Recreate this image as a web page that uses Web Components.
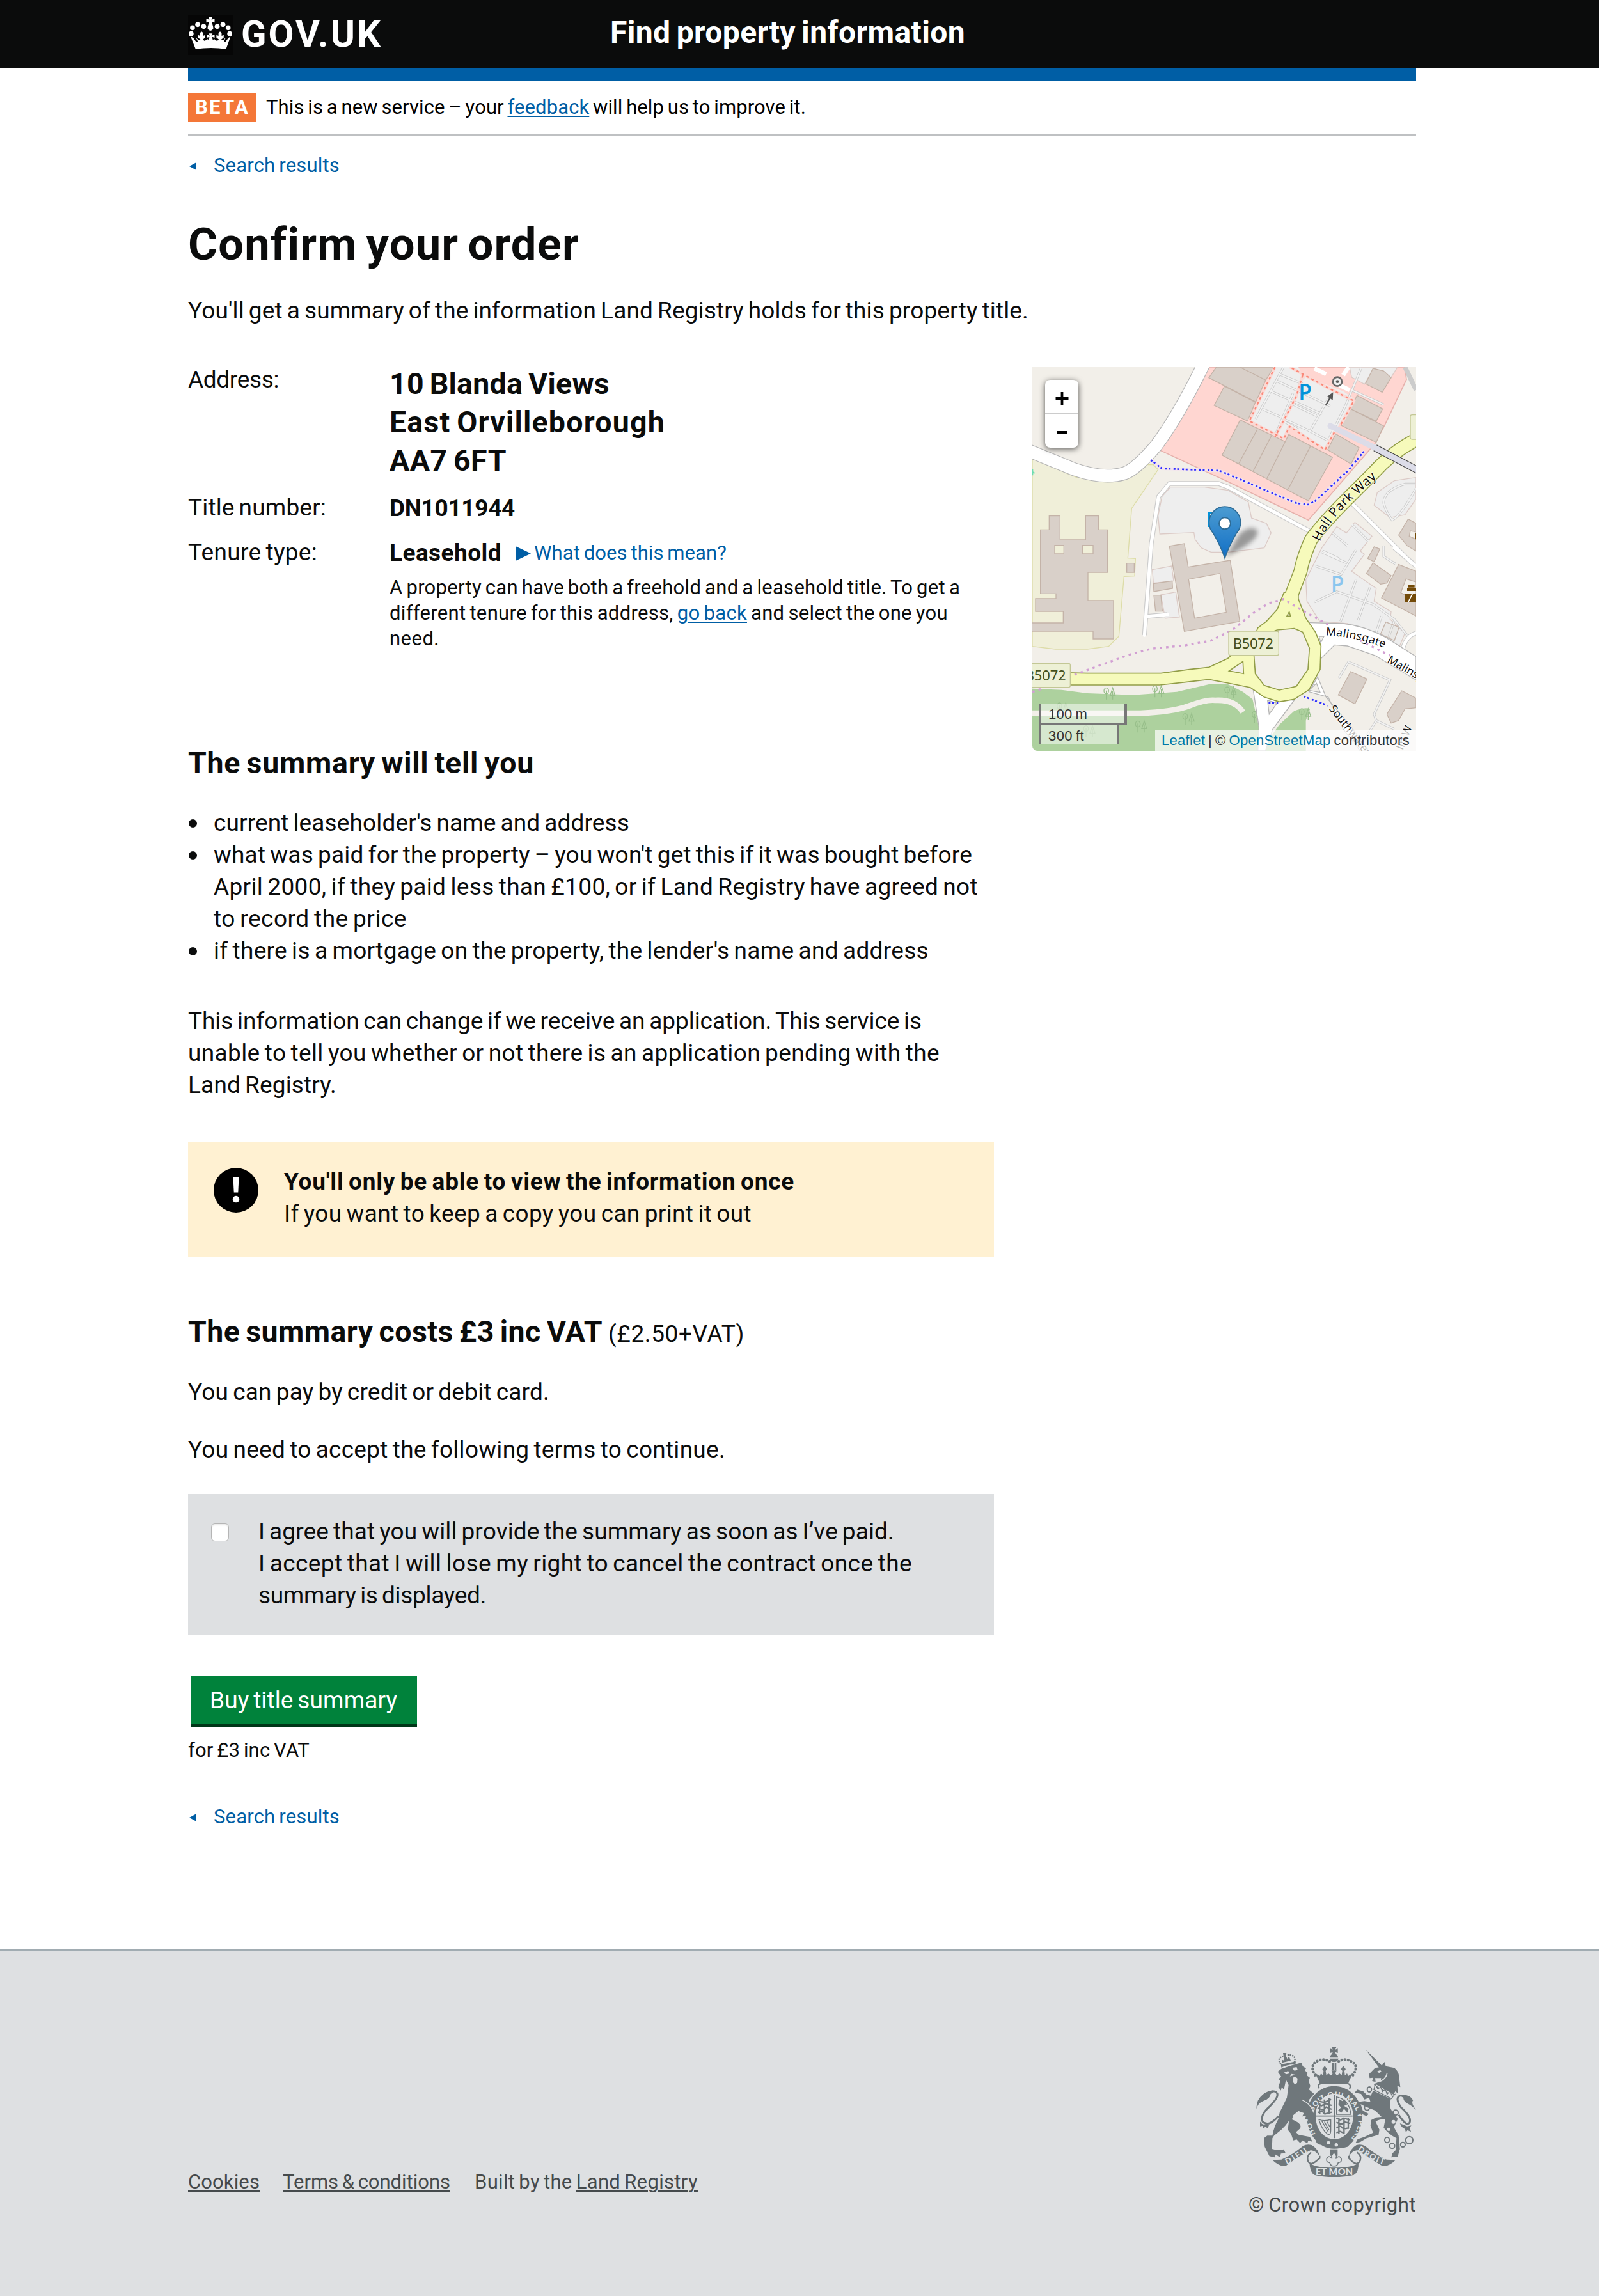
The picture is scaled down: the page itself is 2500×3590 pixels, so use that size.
<!DOCTYPE html>
<html lang="en">
<head>
<meta charset="utf-8">
<title>Confirm your order</title>
<style>
body{margin:0;background:#fff;color:#0b0c0c;font-family:Roboto,"Noto Sans",sans-serif;font-size:37px;line-height:50px}
</style>
</head>
<body>
<order-page></order-page>
<script>
function define(name, css, html, connected) {
  const tpl = document.createElement('template');
  tpl.innerHTML = '<style>' + css + '</style>' + html;
  customElements.define(name, class extends HTMLElement {
    constructor() {
      super();
      this.attachShadow({mode: 'open'}).append(tpl.content.cloneNode(true));
    }
    connectedCallback() { if (connected) connected.call(this); }
  });
}
const LINK = 'a{color:#005ea5;text-decoration:underline;text-decoration-thickness:2px;text-underline-offset:3px}';

/* One line of copy, tracked so that it runs to the given measure. */
define('fit-text', ':host{display:inline-block;width:max-content;white-space:nowrap;vertical-align:baseline;word-spacing:-.065em}', '<slot></slot>', function () {
  const w = parseFloat(this.getAttribute('w'));
  const n = this.textContent.length;
  const natural = this.getBoundingClientRect().width;
  if (w && n && natural) this.style.letterSpacing = ((w - natural) / n).toFixed(3) + 'px';
});

define('crown-icon', ':host{display:block;width:70px;height:62px}svg{display:block}', `
<svg width="70" height="62" viewBox="34 72 172 186" preserveAspectRatio="none" fill="#fff">
<rect x="34" y="72" width="172" height="186" fill="#060606"/>
<ellipse cx="46" cy="158" rx="9.500" ry="12"/><ellipse cx="51" cy="130" rx="9.500" ry="11.500"/><ellipse cx="71" cy="115" rx="9.500" ry="11.500"/><ellipse cx="94" cy="124" rx="9.500" ry="11.500"/>
<ellipse cx="146" cy="124" rx="9.500" ry="11.500"/><ellipse cx="168" cy="115" rx="9.500" ry="11.500"/><ellipse cx="188" cy="130" rx="9.500" ry="11.500"/><ellipse cx="194" cy="158" rx="9.500" ry="12"/>
<path d="M112 78h16l-4 14 12-4v18l-11-4 5 22a11 14 0 1 1-20 0l5-22-11 4V88l12 4z"/>
<path d="M44 172l10 6 12 20 6-2-8-20 10 12 8-2-10-10 0-12 8 4 0-14 6-6 6 6 0 14 8-4 0 12-10 10 8 6 10-8 6 3 2-14-10 4v-14l12 4-4-10h14l-4 10 12-4v14l-10-4 3 14 6-3 10 8 8-6-10-10 0-12 8 4 0-14 6-6 6 6 0 14 8-4 0 12-10 10 8 2 10-12-8 20 6 2 12-20 8-6-17 58q-57-10-117 0z"/>
</svg>`);

define('gov-header', `
:host{display:block;background:#0b0c0c;height:106px;color:#fff}
.wrap{padding-left:294px;display:flex}
crown-icon{margin-top:24px}
.logo{margin:18px 0 0 13px;width:219px;font:bold 58px/70px Roboto,sans-serif}
.svc{margin:17px 0 0 358px;font:bold 48px/68px Roboto,sans-serif}
`, `<div class="wrap"><crown-icon></crown-icon><div class="logo"><fit-text w="221">GOV.UK</fit-text></div><div class="svc"><fit-text w="555">Find property information</fit-text></div></div>`);

define('phase-banner', `
:host{display:flex;box-sizing:border-box;border-top:20px solid #005ea5;border-bottom:2px solid #bfc1c3;height:106px;padding-top:20px;font-size:31px;line-height:43px}
.tag{box-sizing:border-box;width:106px;height:44px;padding-left:11px;background:#f47738;color:#fff;font-weight:700;margin-right:16px}
.msg{color:#000}
${LINK}`, `<div class="tag"><fit-text w="85">BETA</fit-text></div><div class="msg"><fit-text w="844">This is a new service – your <a>feedback</a> will help us to improve it.</fit-text></div>`);

define('back-link', `
:host{display:flex;align-items:center;height:40px;font-size:31px;line-height:40px;color:#005ea5}
svg{display:block;width:11px;height:12px;margin:1px 27px 0 2px}`,
`<svg viewBox="0 0 11 12"><path d="M0 6L11 0v12z" fill="#005ea5"/></svg><fit-text w="197">Search results</fit-text>`);

define('detail-row', `
:host{display:flex}
.k{width:315px;flex:none;padding-top:1px;box-sizing:border-box;height:50px}
.v{padding-top:2px;flex:none;font-weight:700}
::slotted(*){display:block}`, `<div class="k"><slot name="label"></slot></div><div class="v"><slot></slot></div>`);

define('what-toggle', `
:host{display:inline-flex !important;align-items:center;color:#005ea5;font-size:31px;font-weight:400;line-height:50px;margin-left:22px}
svg{display:block;margin-right:5px}`, `<svg width="24" height="23" viewBox="0 0 24 23"><path d="M0 0l24 11.500L0 23z" fill="#005ea5"/></svg><fit-text w="301">What does this mean?</fit-text>`);

define('bullet-item', `
:host{display:flex}
i{flex:none;width:13px;height:13px;border-radius:50%;background:#0b0c0c;margin:19px 26px 0 1px}
`, `<i></i><div><slot></slot></div>`);

define('warning-notice', `
:host{display:flex;box-sizing:border-box;height:180px;background:#fff1d2;padding:37px 0 0 40px}
svg{display:block;margin:3px 40px 0 0;flex:none}
b,span{display:block}`, `<svg width="70" height="70"><circle cx="35" cy="35" r="35"/><path d="M30.500 14h9l-1.200 24.500h-6.600z" fill="#fff"/><circle cx="35" cy="49" r="5.300" fill="#fff"/></svg>
<div><b><fit-text w="798">You'll only be able to view the information once</fit-text></b><span><fit-text w="731">If you want to keep a copy you can print it out</fit-text></span></div>`);

define('terms-box', `
:host{display:flex;box-sizing:border-box;height:220px;background:#dee0e2;padding:34px 0 0 36px}
i{flex:none;box-sizing:border-box;width:28px;height:28px;background:#fff;border:1px solid #b5b5b5;border-radius:6px;margin:12px 46px 0 0;box-shadow:inset 0 2px 2px rgba(0,0,0,.08)}
`, `<i role="checkbox"></i><div><div><fit-text w="994">I agree that you will provide the summary as soon as I’ve paid.</fit-text></div><div><fit-text w="1022">I accept that I will lose my right to cancel the contract once the</fit-text></div><div><fit-text w="356">summary is displayed.</fit-text></div></div>`);

define('buy-button', `
:host{display:block;box-sizing:border-box;width:354px;height:76px;background:#00823b;box-shadow:0 4px 0 #003618;color:#fff;padding:1px 0 0 30px;line-height:76px}
`, `<fit-text w="293">Buy title summary</fit-text>`);

define('map-zoom', `
:host{display:block;width:52px;height:106px;background:#fff;border-radius:8px;box-shadow:0 2px 10px rgba(0,0,0,.65)}
svg{display:block}`, `<svg width="52" height="106"><path d="M0 53h52" stroke="#ccc" stroke-width="2"/><path d="M16.500 29h20M26.500 19v20M19 82h16" stroke="#000" stroke-width="3.800"/></svg>`);

define('map-scale', `
:host{display:block;font:22px/26px "Liberation Sans",Arial,sans-serif;color:#333}
div{box-sizing:border-box;background:rgba(255,255,255,.5);border:4px solid #777;border-top:0;padding-left:11px}
.m{width:138px;height:34px;padding-top:4px}
.f{width:126px;height:30px;border-bottom:0;padding-top:4px}`, `<div class="m"><fit-text w="61">100 m</fit-text></div><div class="f"><fit-text w="56">300 ft</fit-text></div>`);

define('map-credit', `
:host{display:block;box-sizing:border-box;width:408px;height:32px;padding-left:10px;background:rgba(255,255,255,.7);font:22px/32px "Liberation Sans",Arial,sans-serif;color:#333;white-space:nowrap}
a{color:#0078a8}`, `<fit-text w="388"><a>Leaflet</a> | © <a>OpenStreetMap</a> contributors</fit-text>`);

define('property-map', `
:host{display:block;position:relative;width:600px;height:600px;overflow:hidden;border-radius:0 0 0 8px}
.tiles{display:block}
map-zoom{position:absolute;left:20px;top:20px}
map-scale{position:absolute;left:10px;top:526px}
map-credit{position:absolute;right:0;bottom:0}
.bl{fill:#d9d0c9;stroke:#c4b3a8;stroke-width:4}
.pk{fill:#eee;stroke:#dccbc7;stroke-width:4}
.cs{fill:none;stroke:#b5b5b5}
.wh{fill:none;stroke:#fff}
.lot{fill:none;stroke:#c9c9c9;stroke-width:11}
.lot2{fill:none;stroke:#f2f2f2;stroke-width:6}
.lbl{font-family:"Noto Sans",sans-serif;fill:#111;stroke:#fff;stroke-width:7;paint-order:stroke;stroke-opacity:.6}
`, `
<svg class="tiles" width="600" height="600" viewBox="42 42 1800 1800">
<defs>
<linearGradient id="pin" x1="0" y1="0" x2="0" y2="1"><stop offset="0" stop-color="#4c9cd1"/><stop offset="1" stop-color="#126fc6"/></linearGradient>
<filter id="soft" x="-50%" y="-50%" width="200%" height="200%"><feGaussianBlur stdDeviation="11"/></filter>
<path id="hall" d="M1392 862Q1430 775 1500 705T1665 555"/>
<path id="mal" d="M1418 1300Q1560 1307 1700 1362"/>
<g id="tree" fill="none" stroke="#98bf8b" stroke-width="4"><ellipse cx="14" cy="16" rx="11" ry="14"/><path d="M14 14v42M44 2L32 38h24zM44 18v38"/></g>
<path id="lots" d="M1220 42L1090 285M1200 75L1310 120M1185 105L1440 225M1160 155L1400 262M1125 240L1205 275M1210 290L1290 335M1240 335L1225 375M1265 165L1180 365M1250 210L1375 270M1230 290L1330 335L1425 385M1345 342L1430 190M1585 45L1510 225L1430 385M1540 150L1690 218
M1400 910L1515 960M1370 975L1490 1015L1560 900M1365 1145L1470 1095L1640 1155L1740 1225L1800 1300M1560 1040L1488 1235M1625 1075L1570 1230M1680 1210L1650 1300M1740 1230L1710 1320M1450 820L1520 880M1540 780L1620 860M1405 905L1480 940
M1690 880V930L1745 965M1480 1500L1525 1425L1720 1510L1645 1670L1655 1700L1740 1740M1655 1700L1600 1790M1840 590H1790Q1690 620 1690 680Q1700 720 1730 760Q1770 740 1842 610"/>
</defs>
<rect x="42" y="42" width="1800" height="1800" fill="#f2efe9"/>
<path d="M42 470L250 560 480 560 575 500H610L632 522 508 705 490 938 526 940 522 1022 472 1024 448 1305 400 1352 300 1365H150L42 1352z" fill="#f0efd9" stroke="#dddca8" stroke-width="4"/>
<path d="M30 530q20 8 22 8M42 520v30" stroke="#6edcb0" stroke-width="8"/>
<path d="M872 42L640 432 960 580 1337 760 1650 400 1697 310 1797 100 1788 42z" fill="#ffd6d1" stroke="#e6b1ac" stroke-width="5"/>
<path class="bl" d="M905 42L870 92 1090 205 1137 103 1175 42zM943 132L895 222 1052 295 1088 207zM1015 42L1137 103M1017 290L932 455 1337 670 1450 465 1245 358 1228 392zM1097 335L1010 495M1163 365L1078 530M1230 388L1143 563M1347 412L1243 613M1427 430L1465 355 1575 420 1537 497zM1490 315L1535 238 1690 318 1655 395zM1535 238L1565 175 1685 238 1655 295z"/>
<path class="pk" d="M1530 42L1540 90 1600 122 1645 48 1725 90 1755 42z"/>
<path class="bl" d="M1605 120L1640 48 1690 60 1725 92 1683 160z"/>
<path d="M1180 42L1060 290 1225 378 1250 325 1415 428 1550 190 1500 155 1310 80 1290 42z" fill="#eee"/>
<path class="pk" d="M1400 890L1470 790 1515 820 1555 770 1635 835 1580 905 1600 920 1540 1000 1655 1080 1645 1140 1725 1190 1720 1225 1790 1290 1765 1350 1520 1245 1390 1235 1330 1140 1325 1040z"/>
<path class="pk" d="M1842 560L1740 575 1660 630 1645 690 1720 748 1790 735 1842 660z"/>
<path class="pk" d="M690 605H850L960 620 1055 675 1070 750 1140 775 1162 820 1130 890 960 910H880L835 890 805 850 800 818 640 825 632 740 650 650zM605 992L695 975 705 1045 610 1055zM645 1110L715 1097 732 1215 665 1220z"/>
<use href="#lots" class="lot"/><use href="#lots" class="lot2"/>
<path d="M1180 42L1060 295 1222 378 1248 320 1415 430 1460 345M1490 310L1550 200 1430 140 1320 80 1250 42M1310 80L1280 180 1180 370M1325 50L1310 100" fill="none" stroke="#fbd9d4" stroke-width="14"/>
<path d="M1180 42L1060 295 1222 378 1248 320 1415 430 1460 345M1490 310L1550 200 1430 140 1320 80 1250 42M1310 80L1280 180 1180 370" fill="none" stroke="#fa8878" stroke-width="7" stroke-dasharray="12 14"/>
<path class="wh" stroke-width="20" d="M1365 48L1420 75M1480 125L1530 150M1500 80L1525 42"/>
<circle cx="1473" cy="110" r="21" fill="#eee" stroke="#666" stroke-width="8"/><circle cx="1473" cy="110" r="7" fill="#555"/>
<path d="M1418 222L1442 180" stroke="#555" stroke-width="7"/><path d="M1425 180L1453 160 1451 197z" fill="#555"/>
<path class="bl" fill-rule="evenodd" d="M121 740H172V852H292V740H352V805H395V1005H303V1137H423V1317H327V1281H30V1242H187V1188H57V1128H153V1105H80V805H121zM147 878V918H190V878zM277 878V918H327V878z"/>
<path class="bl" fill-rule="evenodd" d="M685 882L755 870 773 980 970 948 1015 1235 755 1282zM775 1037L922 1010 952 1192 803 1220z"/>
<path class="bl" d="M485 962H520V1005H485zM610 1058L698 1045 700 1080 612 1095zM612 1112H645L652 1187H620zM1610 1010L1640 960 1725 1020 1705 1055 1675 1060zM1535 1470L1612 1505 1555 1622 1477 1580zM1775 1560L1842 1595V1640L1790 1645 1760 1700 1725 1712 1705 1670zM1645 885L1672 895 1645 955 1615 940z"/>
<path class="bl" fill-rule="evenodd" d="M1760 968L1842 1000V1210L1680 1125zM1795 1035L1770 1100 1842 1140V1050zM1760 830L1805 755 1842 775V905L1800 880zM1815 810L1810 835 1842 850V815z"/>
<path class="bl" fill-opacity=".2" d="M1675 1295L1700 1238 1762 1262 1740 1325z"/>
<path d="M1805 1064h30v12h-30zM1800 1080h42v12h-42zM1788 1105h54v40h-54zM1838 820h10v30h-10z" fill="#734a08"/><path d="M1805 1145l20-40" stroke="#fff" stroke-width="5"/>
<path d="M42 1550L180 1556 300 1572 520 1580 720 1565 870 1530H960L1030 1565 1075 1600 1105 1730 1100 1842H42zM1115 1842L1200 1720 1270 1655Q1320 1635 1345 1645L1325 1700V1842z" fill="#add19e"/>
<path d="M42 1665H550Q700 1660 780 1630T900 1605Q990 1600 1030 1660" fill="none" stroke="#f2efe9" stroke-width="26"/>
<use href="#tree" x="375" y="1545"/><use href="#tree" x="603" y="1535"/><use href="#tree" x="155" y="1615"/><use href="#tree" x="280" y="1722"/><use href="#tree" x="523" y="1700"/><use href="#tree" x="745" y="1665"/><use href="#tree" x="942" y="1540"/><use href="#tree" x="1070" y="1655"/><use href="#tree" x="1292" y="1642"/><use href="#tree" x="800" y="1760"/>
<path d="M42 1556L180 1566 300 1576 520 1582 720 1565 870 1530" fill="none"/>
<path class="cs" stroke-width="64" d="M30 436L240 522Q380 570 475 540Q530 520 625 408Q730 265 845 30"/>
<path class="wh" stroke-width="57" d="M30 436L240 522Q380 570 475 540Q530 520 625 408Q730 265 845 30"/>
<path class="cs" stroke-width="22" stroke-linejoin="round" style="stroke:#ccc" d="M568 1300L600 870 634 650 685 588H915L960 605 1350 815M575 1212L675 1203M1530 670L1820 960M1740 890L1842 975M1780 1360Q1800 1300 1842 1290M1790 42L1842 150"/>
<path class="wh" stroke-width="15" stroke-linejoin="round" stroke-linecap="round" d="M568 1300L600 870 634 650 685 588H915L960 605 1350 815M575 1212L675 1203M1530 670L1820 960M1740 890L1842 975M1780 1360Q1800 1300 1842 1290"/>
<path d="M1320 1240L1500 1245Q1600 1255 1700 1310L1842 1400V1510L1650 1395 1520 1350 1460 1345 1390 1415zM1078 1555L1105 1730 1100 1842H1135L1170 1740 1270 1605 1150 1590zM1380 1495L1420 1590 1530 1720 1620 1842H1580L1500 1740 1430 1590 1340 1565z" fill="#fff" stroke="#b5b5b5" stroke-width="4"/>
<path d="M1145 1605L1190 1618 1153 1670zM1375 1525L1392 1568 1340 1558zM1387 1305L1410 1305 1395 1335z" fill="#f2efe9" stroke="#b5b5b5" stroke-width="4"/>
<path d="M1860 374Q1740 430 1640 540L1520 660Q1410 770 1350 850Q1310 940 1300 1000L1258 1110" fill="none" stroke="#929d48" stroke-width="66"/>
<path d="M42 1472L300 1478H645L780 1460 870 1450 960 1408 1090 1290 1100 1265 1140 1235 1190 1180 1222 1100 1288 1080 1290 1130 1325 1220 1370 1285 1396 1350 1392 1460 1340 1555 1270 1600 1200 1612 1130 1590 1065 1545 960 1524 870 1507 760 1520 640 1533H230L42 1530z" fill="#f6fabb" stroke="#929d48" stroke-width="5"/>
<path d="M1860 374Q1740 430 1640 540L1520 660Q1410 770 1350 850Q1310 940 1300 1000L1258 1110" fill="none" stroke="#f6fabb" stroke-width="57"/>
<path d="M1190 1275L1270 1268 1310 1285 1342 1360 1335 1460 1280 1540 1200 1557 1130 1535 1088 1480 1082 1400 1100 1310zM965 1467L1030 1423 1033 1480zM1236 1210L1247 1190 1253 1210z" fill="#f2efe9" stroke="#929d48" stroke-width="5"/>
<path d="M1650 421L1850 526" stroke="#444" stroke-width="34"/><path d="M1440 318L1650 421 1850 526" fill="none" stroke="#dcdce8" stroke-width="27" stroke-linecap="round"/>
<rect x="1815" y="266" width="60" height="115" rx="8" fill="#edf0d5" stroke="#c3c795" stroke-width="4"/>
<path d="M42 1565L90 1550M240 1485L500 1390 600 1363 760 1347 880 1325 980 1275 1080 1195 1150 1150 1220 1130 1310 1185 1440 1255M1580 1325L1720 1395" fill="none" stroke="#d29fd3" stroke-width="10" stroke-dasharray="11 19"/>
<path d="M598 478L650 518 850 525 920 528 1280 680 1335 687 1370 670 1520 530 1600 435" fill="none" stroke="#f3e4ee" stroke-width="14"/>
<path d="M598 478L650 518 850 525 920 528 1280 680 1335 687 1370 670 1520 530 1600 435M1150 1617H1195M1315 1587L1430 1630" fill="none" stroke="#2d2dff" stroke-width="8" stroke-dasharray="9 8 9 14"/>
<g font-family="Noto Sans" font-size="98"><text fill="#0092da" stroke="#0092da" stroke-width="3" x="1292" y="196">P</text>
<text fill="#8bc6ee" stroke="#8bc6ee" stroke-width="3" x="1444" y="1094">P</text></g>
<path d="M864 720h50v72h-50z" fill="#0092da"/><path d="M876 732h12v20h-12z" fill="#fff"/>
<g class="lbl">
<text font-size="60"><textPath href="#hall" textLength="405">Hall Park Way</textPath></text>
<text font-size="52"><textPath href="#mal" textLength="282">Malinsgate</textPath></text>
<text font-size="52" transform="translate(1704 1424) rotate(30)">Malinsgate</text>
<text font-size="52" transform="translate(1432 1645) rotate(52)">Southwater</text>
<text font-size="50" transform="translate(1780 1840) rotate(-68)">lin W</text>
</g>
<g fill="#edf0d5" stroke="#c3c795" stroke-width="4"><rect x="-20" y="1432" width="240" height="112" rx="8"/><rect x="963" y="1281" width="235" height="113" rx="8"/></g>
<g font-family="Noto Sans" font-size="66" fill="#45501b"><text x="8" y="1511" textLength="192">B5072</text><text x="983" y="1361" textLength="190">B5072</text></g>
<path d="M950 932L1010 830Q1060 780 1095 805Q1120 850 950 932z" fill="#000" opacity=".36" filter="url(#soft)"/>
<path d="M945 938Q925 880 890 820A74 74 0 1 1 1000 820Q965 880 945 938z" fill="url(#pin)" stroke="#2e6c97" stroke-width="5"/>
<circle cx="945" cy="775" r="27" fill="#fff" stroke="#2e6c97" stroke-width="6"/>
</svg>
<map-zoom></map-zoom><map-scale></map-scale><map-credit></map-credit>`);

define('royal-arms', ':host{display:block;width:250px;height:204px}svg{display:block}text{font-family:Lato,"Liberation Sans",sans-serif;font-weight:900}', `
<svg width="250" height="204" viewBox="132 60 750 612" fill="#6f777b">
<defs>
<path id="arc" d="M411 470A109 112 0 1 1 580 486"/>
<path id="dieu" d="M276 614Q330 590 384 546"/><path id="droit" d="M606 546Q660 592 740 616"/>
</defs>
<path d="M485 60h24l-6 14 12-4v20l-12-4 4 12h-20l4-12-12 4V70l12 4zM478 112a19 19 0 0 1 38 0zM476 116h42q-2 16-21 16t-21-16zM487 136h8v32h-8zM500 136h8v32h-8z"/>
<g fill="none" stroke="#6f777b" stroke-width="13" stroke-linecap="round" stroke-dasharray=".1 15.200"><path d="M408 194Q382 150 415 130Q450 110 482 134M586 194Q616 150 579 130Q544 110 512 134"/></g>
<path d="M408 184l22 14 6-12 10 10 2-22-6-8 12-16 10 16-6 8 3 20 10-8 12 10 8-10-6-14h24l-6 14 8 10 12-10 10 8 3-20-6-8 10-16 12 16-6 8 2 22 10-10 6 12 22-14-18 38q-2 8-6 14h-130q-4-6-6-14z"/>
<path d="M428 256q-12-24 20-24h100q34 0 22 26" fill="none" stroke="#6f777b" stroke-width="7"/>
<path fill-rule="evenodd" d="M497 245c72 0 131 60 131 142 0 88-60 152-131 152s-127-68-127-152 58-142 127-142zm2 36c-50 0-88 44-88 105s38 108 88 108 88-48 88-108-38-105-88-105z"/>
<text font-size="34" fill="#dee0e2"><textPath href="#arc" textLength="525">HONI SOIT QUI MAL Y PENSE</textPath></text>
<path d="M499 288v202M414 386h170" stroke="#6f777b" stroke-width="5"/>
<g fill="none" stroke="#6f777b" stroke-width="7"><path d="M424 316l28 6 32-14M424 328l14 10 20-10 28 8M420 348l26 8 14-12 26 10M420 370l20-8 14 14 32-8M430 326v50M452 308v70M474 300v76M508 396l20 8 14-8 28 8M508 416l26 8 12-10 28 6M508 440l20-6 14 12 22-4M508 464l18-6 18 8M520 396v74M544 396v74M564 396v50"/></g>
<g fill="none" stroke="#6f777b" stroke-width="4"><path d="M509 296Q570 310 576 378H509zM426 402Q452 412 482 402V450Q482 480 466 470Q440 450 426 402zM440 410l30 50M452 412l22 40M464 412l14 26"/></g>
<path d="M520 306l16 10 10-10 12 26-14 6 22 14-6 18-16-18-12 18-16-10 14-14-12-14z"/>
<path d="M432 484Q480 520 530 500Q560 480 590 500L560 530Q500 550 440 518z"/><circle cx="435" cy="497" r="20" fill="none" stroke="#6f777b" stroke-width="7"/><circle cx="471" cy="511" r="8" fill="#dee0e2"/><circle cx="508" cy="521" r="8" fill="#dee0e2"/>
<path d="M480 542h34v30h-34z"/><path d="M497 556q18 16 8 30q18-20 26 0q4 18-14 18-4 18-20 16-16 2-20-16-18 0-14-18 8-20 26 0-10-14 8-30z" fill="#dee0e2" stroke="#6f777b" stroke-width="5"/>
<!-- lion -->
<path d="M233 178L250 164 300 148 345 135 350 152 366 162 360 172 374 184 368 194 384 206 378 222 386 244 380 262 404 282 378 312 390 340 404 372 408 408 390 416 372 412 378 396 360 402 366 384 348 388 356 372 330 362 306 382 300 402Q350 420 338 444L318 462 332 474 384 484 396 506 376 502 372 514 350 500 338 512 322 496 306 500 296 470 280 450 286 408Q272 430 250 450L216 478 208 490 206 540 230 546 262 542 270 560 248 562 244 580 224 566 218 580 194 574 172 530 168 490 184 478 208 478Q214 440 236 400L242 370 276 300 284 240 272 216 262 262 252 250 248 266 236 250 246 220 236 212 250 202z"/>
<path d="M262 182l20-8 6 12-16 4zM300 160l22-4 4 12-14 6zM304 208q10-14 22 2l-2 20q-10 12-20-4zM290 200l8-12 18 4" fill="#dee0e2"/>
<path d="M347 310Q390 330 402 370" fill="none" stroke="#dee0e2" stroke-width="4"/>
<path d="M250 158q30-16 66-14l2-14-70 14z"/><g fill="none" stroke="#6f777b" stroke-width="8" stroke-linecap="round" stroke-dasharray=".1 11"><path d="M246 140q-20-28 18-36M312 132q10-38-40-32"/></g><path d="M258 90l16 0-4 10 8 18 8-12 8 20-40 10 0-14 10 4z"/>
<path d="M236 386Q190 440 162 412Q150 380 196 340Q246 290 226 274Q206 262 190 280" fill="none" stroke="#6f777b" stroke-width="9"/>
<path d="M224 268Q190 262 164 284 130 312 134 352 140 324 168 314 198 304 200 282zM150 412q10 18 30 14l14-2-8 20-10-8-10 8-4-12-12 2z"/>
<!-- unicorn -->
<path d="M646 74L726 154 712 164zM662 188L690 160 716 156 734 132 740 152 780 160Q800 176 802 200L808 250 794 244 796 278 784 270 770 300 740 290 690 252 684 236 716 222 718 208 690 208 692 226 676 222 680 206 664 208z"/>
<path d="M700 176l14-6 6 8-12 6z" fill="#dee0e2"/><path d="M712 224Q742 210 746 186M690 238L784 292" stroke="#dee0e2" stroke-width="5" fill="none"/>
<path d="M690 236l-6 26 82 42 16-20-14 4-8-20-14 16-8-24-14 12-8-22-14 8z" fill="#dee0e2" stroke="#6f777b" stroke-width="4"/>
<path d="M680 266L764 306Q750 350 778 370L796 400 778 438 800 478 806 540 796 576 766 580 770 562 786 546 790 490Q752 470 730 440L738 400Q710 400 692 412L710 450 706 474 650 490 620 508 598 512 608 494 640 484 680 464 668 430 672 404 696 392 720 390 690 360 640 340 622 330 632 360 660 376 650 386 618 372 606 320 640 316 668 320 662 300 640 308 624 282 594 276 606 262 634 270 650 286 670 290z"/>
<g fill="#dee0e2" stroke="none"><circle cx="776" cy="413" r="9"/><circle cx="754" cy="448" r="8"/></g>
<g fill="none" stroke="#6f777b" stroke-width="6"><ellipse cx="663" cy="261" rx="10" ry="12"/><ellipse cx="652" cy="345" rx="12" ry="14"/><circle cx="786" cy="370" r="12"/><ellipse cx="746" cy="498" rx="11" ry="13"/><circle cx="770" cy="526" r="12"/><circle cx="820" cy="520" r="11"/><circle cx="850" cy="499" r="17"/></g>
<path d="M800 380Q840 440 852 416Q862 390 812 346Q780 300 808 290Q830 288 840 306" fill="none" stroke="#6f777b" stroke-width="9"/>
<path d="M806 290Q850 280 868 312 856 324 882 358 862 336 840 326 824 318 822 300zM806 420q10 24 24 26l4 16 8-10 16 8-6-20 8-10-20 4z"/>
<!-- ribbons -->
<path d="M208 592L250 590Q300 570 352 526Q370 516 392 522Q426 540 430 580Q420 550 388 546Q350 562 270 620Q240 624 208 592zM786 592L744 590Q694 570 642 526Q624 516 602 522Q570 540 566 580Q576 550 606 546Q650 575 724 620Q756 624 786 592z"/>
<path d="M382 604Q400 628 497 628T612 604Q614 650 590 662Q550 672 497 672T404 662Q384 650 382 604z"/>
<path d="M390 556Q368 572 374 594Q384 620 410 600L430 584V572M604 556Q628 572 620 594Q608 620 584 600L567 584V572" fill="none" stroke="#6f777b" stroke-width="7"/>
<g fill="#dee0e2" font-size="38"><text><textPath href="#dieu" textLength="116">DIEU</textPath></text><text><textPath href="#droit" textLength="142">DROIT</textPath></text><text x="411" y="664" font-size="44" textLength="174">ET MON</text></g>
</svg>`);

define('gov-footer', `
:host{display:flex;box-sizing:border-box;height:542px;background:#dee0e2;border-top:2px solid #a1acb2;padding:150px 286px 0 294px;color:#454a4c;font-size:31px;line-height:40px;justify-content:space-between}
.links{display:flex;margin-top:192px;height:40px}
.a{width:148px}.b{width:300px}
u,.a fit-text,.b fit-text{text-decoration:underline;text-decoration-thickness:2px;text-underline-offset:3px}
.right{display:flex;flex-direction:column;align-items:flex-end}
.c{margin-top:24px;width:262px}
`, `<div class="links"><div class="a"><fit-text w="112">Cookies</fit-text></div><div class="b"><fit-text w="262">Terms &amp; conditions</fit-text></div><div><fit-text w="349">Built by the <u>Land Registry</u></fit-text></div></div>
<div class="right"><royal-arms></royal-arms><div class="c"><fit-text w="262">© Crown copyright</fit-text></div></div>`);

define('order-page', `
:host{display:block}
main{box-sizing:border-box;width:1920px;margin-left:294px;height:2942px}
back-link{margin-top:27px}
h1{margin:63px 0 0;font-size:70.500px;line-height:80px}
.lede{margin:39px 0 0;height:50px}
.cols{display:flex;gap:60px;margin-top:57px}
.left{width:1260px}
property-map{margin-top:6px;flex:none}
.addr{font-size:46.500px;line-height:60px}
.addr fit-text,.note fit-text,.p fit-text{display:block}
.r2{margin-top:18px}.r3{margin-top:18px}
.note{font-weight:400;font-size:31px;line-height:40px;padding-top:9px}
.ten{display:flex;height:50px}
h2{margin:0;font-size:46.500px;line-height:60px;height:60px;display:flex;align-items:baseline}
h2 .sm{font-size:37px;font-weight:400;margin-left:9px}
.p{margin:0}
${LINK}`, `
<gov-header></gov-header>
<main>
<phase-banner></phase-banner>
<back-link></back-link>
<h1><fit-text w="611">Confirm your order</fit-text></h1>
<p class="lede"><fit-text w="1314">You'll get a summary of the information Land Registry holds for this property title.</fit-text></p>
<div class="cols"><div class="left">
<detail-row><span slot="label"><fit-text w="142">Address:</fit-text></span><div class="addr"><fit-text w="344">10 Blanda Views</fit-text><fit-text w="431">East Orvilleborough</fit-text><fit-text w="183">AA7 6FT</fit-text></div></detail-row>
<detail-row class="r2"><span slot="label"><fit-text w="216">Title number:</fit-text></span><div><fit-text w="196">DN1011944</fit-text></div></detail-row>
<detail-row class="r3"><span slot="label"><fit-text w="202">Tenure type:</fit-text></span><div><div class="ten"><fit-text w="175">Leasehold</fit-text><what-toggle></what-toggle></div>
<div class="note"><fit-text w="892">A property can have both a freehold and a leasehold title. To get a</fit-text><fit-text w="873">different tenure for this address, <a>go back</a> and select the one you</fit-text><fit-text w="78">need.</fit-text></div></div></detail-row>
<h2 style="margin-top:144px"><fit-text w="541">The summary will tell you</fit-text></h2>
<div class="p" style="margin-top:39px">
<bullet-item><fit-text w="650">current leaseholder's name and address</fit-text></bullet-item>
<bullet-item><fit-text w="1186">what was paid for the property – you won't get this if it was bought before</fit-text><fit-text w="1195">April 2000, if they paid less than £100, or if Land Registry have agreed not</fit-text><fit-text w="302">to record the price</fit-text></bullet-item>
<bullet-item><fit-text w="1118">if there is a mortgage on the property, the lender's name and address</fit-text></bullet-item></div>
<div class="p" style="margin-top:60px"><fit-text w="1147">This information can change if we receive an application. This service is</fit-text><fit-text w="1175">unable to tell you whether or not there is an application pending with the</fit-text><fit-text w="232">Land Registry.</fit-text></div>
<warning-notice style="margin-top:64px"></warning-notice>
<h2 style="margin-top:86px"><fit-text w="648">The summary costs £3 inc VAT</fit-text><span class="sm"><fit-text w="213">(£2.50+VAT)</fit-text></span></h2>
<div class="p" style="margin-top:40px"><fit-text w="565">You can pay by credit or debit card.</fit-text></div>
<div class="p" style="margin-top:40px"><fit-text w="840">You need to accept the following terms to continue.</fit-text></div>
<terms-box style="margin-top:44px"></terms-box>
<buy-button style="margin:64px 0 0 4px"></buy-button>
<div class="p" style="margin-top:21px;font-size:31px;line-height:40px"><fit-text w="190">for £3 inc VAT</fit-text></div>
<back-link style="margin-top:64px"></back-link>
</div><property-map></property-map></div>
</main>
<gov-footer></gov-footer>`);
</script>
</body>
</html>
